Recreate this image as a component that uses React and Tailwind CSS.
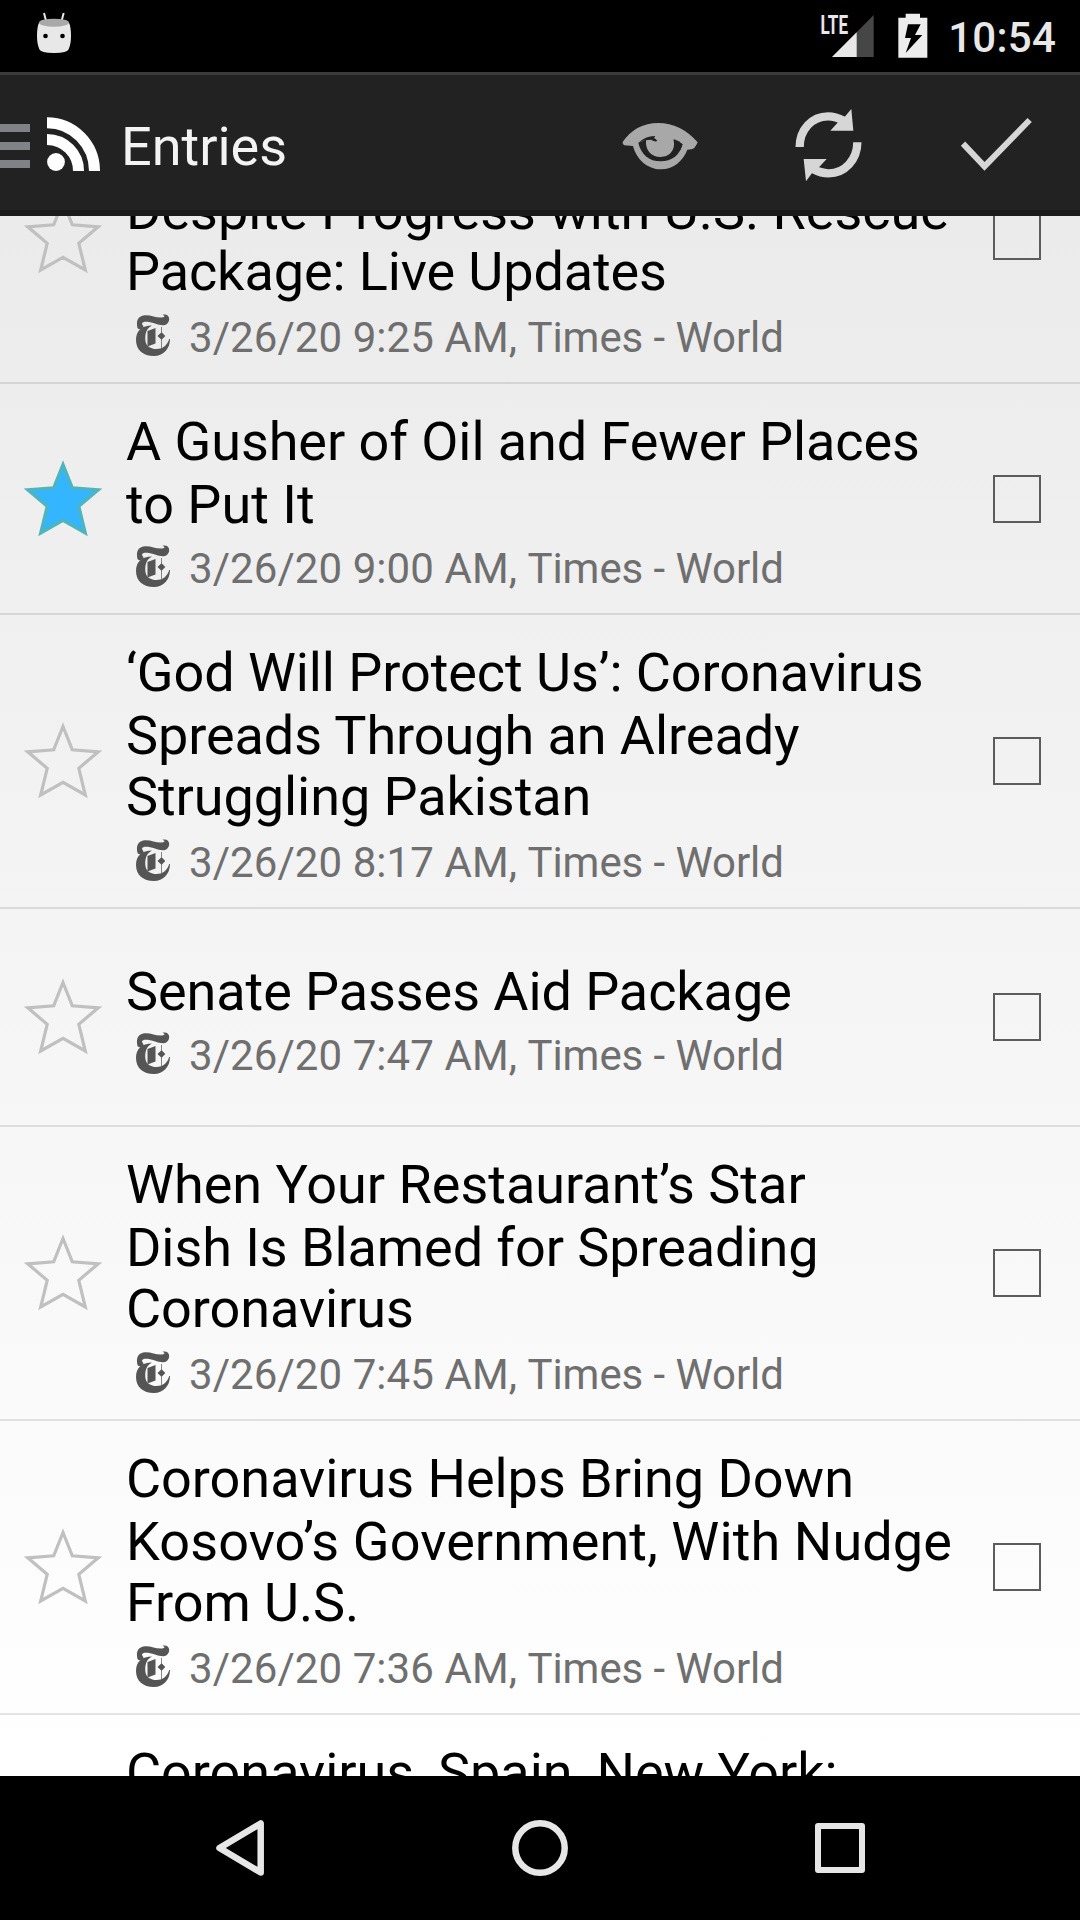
function Robot() {
  return (
    <svg className="h-[42px] w-9" viewBox="108 36 108 126">
      <path d="M132 39 L139 66 M191 39 L184 66" stroke="#e8e8e8" strokeWidth="6" />
      <path d="M117 68 H207 Q213 80 213 108 Q213 132 206 148 Q203 159 162 159 Q121 159 118 148 Q111 132 111 108 Q111 80 117 68 Z" fill="#e8e8e8" />
      <ellipse cx="162" cy="68" rx="45" ry="12" fill="#a9a9a9" />
      <circle cx="136.500" cy="108" r="7" fill="#000" />
      <circle cx="187.500" cy="108" r="7" fill="#000" />
    </svg>
  );
}

function Signal() {
  return (
    <svg className="h-[45px] w-[54px] overflow-visible" viewBox="0 0 54 45">
      <text x="0.500" y="19.700" fontFamily="Roboto" fontWeight="700" fontSize="26" textLength="27.500" lengthAdjust="spacingAndGlyphs" fill="#e8e8e8">
        LTE
      </text>
      <path d="M12 43 L53.700 1 V43 Z" fill="#464646" />
      <path d="M12 43 L36.700 18.200 V43 Z" fill="#e8e8e8" />
    </svg>
  );
}

function Battery() {
  return (
    <svg className="h-[45px] w-[30px]" viewBox="266 40 90 135">
      <path
        fillRule="evenodd"
        fill="#ededed"
        d="M289 42 H332 V54 H354 V174 H267 V54 H289 Z M296 74 L287 115 H305 L289 160 L339 106 H317 L334 74 Z"
      />
    </svg>
  );
}

function RssIcon() {
  return (
    <svg className="h-[54px] w-[54px]" viewBox="0 0 54 54">
      <circle cx="9" cy="45" r="8.900" fill="#fff" />
      <path d="M0 22.500 A31.500 31.500 0 0 1 31.500 54" fill="none" stroke="#fff" strokeWidth="11" />
      <path d="M0 5.800 A47.500 48.200 0 0 1 47.500 54" fill="none" stroke="#fff" strokeWidth="11" />
    </svg>
  );
}

function EyeIcon() {
  return (
    <svg className="mt-1 h-12 w-[76px]" viewBox="21 66 228 144" fill="#a8a8a8">
      <path
        fillRule="evenodd"
        d="M23 126 Q62 69 130 69 Q197 69 248 127 Q239 148 229 148 L217 149 C203 184 175 208 137 208 C98 208 64 178 54 138 L28 136 Q22 133 23 126 Z
           M70 128 C78 163 102 184 137 184 C170 184 195 166 202 133 L175 118 C184 150 163 171 137 171 C108 171 90 150 93 119 Z"
      />
      <path d="M70 129 Q92 107 121 108 Q114 114 122 117 L127 123 Q120 127 108 119 L93 121 Q82 121 70 129 Z" fill="#222" />
      <path d="M178 118 Q192 122 203 133 L196 150 L177 138 Z" fill="#222" />
    </svg>
  );
}

function RefreshIcon() {
  return (
    <svg className="mt-0.5 h-[74px] w-[67px]" viewBox="540 24 201 222">
      <g fill="none" stroke="#d6d6d6" strokeWidth="25">
        <path d="M554 141 C554 90 590 49 639 49 Q662 49 686 62" />
        <path d="M727 127 C727 178 690 220 641 220 Q618 220 594 207" />
      </g>
      <path d="M709 27 L715 92 H646 L669 67 L688 52 Z M566 177 H635 L612 202 L592 218 L573 244 Z" fill="#d6d6d6" />
    </svg>
  );
}

function CheckIcon() {
  return (
    <svg className="h-14 w-[72px]" viewBox="1080 348 216 168">
      <path d="M1089 431 L1153.500 499 L1289 360" fill="none" stroke="#d6d6d6" strokeWidth="18" />
    </svg>
  );
}

function Star({ filled }) {
  return (
    <svg className="h-[78px] w-[78px] shrink-0" viewBox="0 0 78 78">
      <path
        d="M39 4.500 L48.300 27.800 L74.200 29.800 L54.800 46.300 L61.300 73 L39 60.300 L16.700 73 L23.200 46.300 L3.800 29.800 L29.700 27.800 Z"
        fill={filled ? "#33b5ff" : "none"}
        stroke={filled ? "#4fb5bd" : "#c0c0c0"}
        strokeWidth="3.200"
      />
    </svg>
  );
}

function TimesIcon() {
  return (
    <svg className="mt-px h-[42px] w-[34px] shrink-0" viewBox="0 0 34 42" fill="#555">
      <path d="M1.500 14 C-.500 6 3 1.500 9 1.200 C16 1 20 4 26 3.500 C29 3 29.500 2 26.500 .800 C31-.500 34 2.500 33 6.500 C31 13 25 11.500 19 9.500 C12 7 6.500 7 6 9.500 C6 11 7.500 11.500 7.500 13 C6.500 15.500 3 16 1.500 14 Z" />
      <path d="M16 11.500 C10.500 14.500 9 19 9.300 26 C9.800 32.500 15 35 20.500 35 C26 35 31 32 33.200 25 H34 C34 35 27 42 18 42 C7 42 0 36 0 26 C0 16.500 6 11.500 16 11.500 Z" />
      <path d="M11.500 17 L19.500 14 V29.500 L11.500 32.500 Z M25.200 13 H25.900 V18.500 L29.300 22 L25.900 25.500 V34 H25.200 V25.500 L21.500 22 L25.200 18.500 Z" />
    </svg>
  );
}

const ENTRIES = [
  {
    height: "h-[294px]",
    lines: [
      { text: "\u00a0" },
      { text: "Despite Progress with U.S. Rescue", track: "tracking-[-0.02px]" },
      { text: "Package: Live Updates", track: "tracking-[-0.1px]" },
    ],
    time: "9:25",
  },
  {
    height: "h-[231px]",
    lines: [{ text: "A Gusher of Oil and Fewer Places", track: "tracking-[-0.07px]" }, { text: "to Put It" }],
    time: "9:00",
    starred: true,
  },
  {
    height: "h-[294px]",
    lines: [
      { text: "‘God Will Protect Us’: Coronavirus", track: "tracking-[-0.07px]" },
      { text: "Spreads Through an Already", track: "tracking-[-0.07px]" },
      { text: "Struggling Pakistan", track: "tracking-[-0.07px]" },
    ],
    time: "8:17",
  },
  {
    height: "h-[218px]",
    lines: [{ text: "Senate Passes Aid Package", track: "tracking-[-0.08px]" }],
    time: "7:47",
  },
  {
    height: "h-[294px]",
    lines: [
      { text: "When Your Restaurant’s Star" },
      { text: "Dish Is Blamed for Spreading", track: "tracking-[-0.08px]" },
      { text: "Coronavirus", track: "tracking-[-0.07px]" },
    ],
    time: "7:45",
  },
  {
    height: "h-[294px]",
    lines: [
      { text: "Coronavirus Helps Bring Down", track: "tracking-[-0.04px]" },
      { text: "Kosovo’s Government, With Nudge", track: "tracking-[0.11px]" },
      { text: "From U.S.", track: "tracking-[-0.1px]" },
    ],
    time: "7:36",
  },
];

function Entry({ entry }) {
  return (
    <div className={"flex shrink-0 items-center border-b-2 border-black/10 pl-6 pr-[39px] " + entry.height}>
      <Star filled={entry.starred} />
      <div className="ml-6 flex-1 whitespace-nowrap pt-1.5">
        <div className="text-[54px] leading-[63px] text-black">
          {entry.lines.map((line, i) => (
            <div key={i} className={(i === 2 ? "-mt-0.5 pb-0.5 " : "") + (line.track || "")}>
              {line.text}
            </div>
          ))}
        </div>
        <div className="mt-2 flex items-start pl-2.5">
          <TimesIcon />
          <span className="ml-[19px] h-[49px] text-[42px] leading-[50px] text-[#6f6f6f]">
            <span className="tracking-[0.07px]">3/26/20 {entry.time} AM, </span>
            <span className="tracking-[-0.06px]">Times - World</span>
          </span>
        </div>
      </div>
      <div className="h-12 w-12 shrink-0 border-2 border-[#5c5c5c]" />
    </div>
  );
}

export default function App() {
  return (
    <div className="flex h-[1920px] w-[1080px] flex-col overflow-hidden bg-black font-['Roboto',sans-serif]">
      <header className="flex h-[72px] shrink-0 items-start justify-between pl-9 pr-6">
        <div className="pt-3">
          <Robot />
        </div>
        <div className="flex items-start">
          <div className="pt-3.5">
            <Signal />
          </div>
          <div className="ml-6 pt-[13px]">
            <Battery />
          </div>
          <span className="ml-5 mt-[13px] text-[42px] font-medium leading-[49px] tracking-[0.25px] text-[#e8e8e8]">10:54</span>
        </div>
      </header>

      <nav className="flex h-36 shrink-0 items-center border-b-[6px] border-t-[3px] border-b-[#1a1a1a] border-t-[#3b3b3b] bg-[#222] pt-[3px]">
        <div className="flex w-[30px] flex-col gap-2.5 pt-1">
          <div className="h-2 bg-[#808287]" />
          <div className="h-2 bg-[#808287]" />
          <div className="h-2 bg-[#808287]" />
        </div>
        <div className="ml-[17px]">
          <RssIcon />
        </div>
        <span className="ml-5 mt-1 text-[54px] leading-[63px] text-[#f3f3f3]">Entries</span>
        <div className="ml-auto flex items-center pr-12">
          <EyeIcon />
          <div className="ml-[97px]">
            <RefreshIcon />
          </div>
          <div className="ml-[98px]">
            <CheckIcon />
          </div>
        </div>
      </nav>

      <main className="flex h-[1560px] shrink-0 flex-col overflow-hidden bg-linear-to-b from-[#ebebeb] to-white">
        <div className="-mt-[126px] flex shrink-0 flex-col">
          {ENTRIES.map((e) => (
            <Entry key={e.time} entry={e} />
          ))}
        </div>
        <div className="shrink-0 pl-[126px] pt-[26px] text-[54px] leading-[63px] tracking-[-0.04px] text-black">
          Coronavirus, Spain, New York:
        </div>
      </main>

      <footer className="flex h-36 shrink-0 items-center justify-between pl-[214px] pr-[213px]">
        <svg className="h-15 w-[52px]" viewBox="214 1818 52 60" fill="none" stroke="#e6e6e6" strokeWidth="6.500" strokeLinejoin="round">
          <path d="M260.700 1823.500 V1872.500 L219.500 1848 Z" />
        </svg>
        <svg className="h-15 w-15" viewBox="0 0 60 60" fill="none" stroke="#e6e6e6" strokeWidth="6.500">
          <circle cx="30" cy="30" r="24.700" />
        </svg>
        <svg className="h-15 w-[54px]" viewBox="0 0 54 60" fill="none" stroke="#e6e6e6" strokeWidth="6" strokeLinejoin="round">
          <rect x="5" y="8" width="44" height="44" />
        </svg>
      </footer>
    </div>
  );
}
